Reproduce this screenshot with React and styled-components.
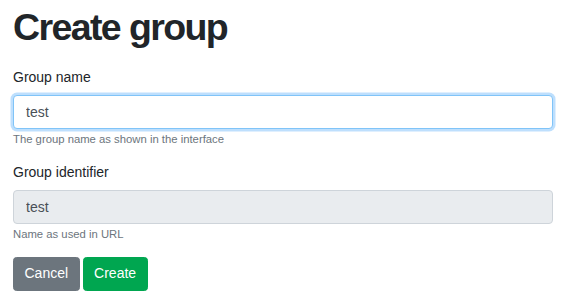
import styled, { createGlobalStyle, css } from "styled-components";

const GlobalStyle = createGlobalStyle`
  * {
    box-sizing: border-box;
  }
  body {
    margin: 0;
    background: #fff;
    color: #212529;
    font-family: "Liberation Sans", Arial, sans-serif;
    font-size: 14px;
    line-height: 1.5;
  }
`;

const Page = styled.div`
  padding: 4px 18px 0 13px;
`;

const Title = styled.h1`
  margin: 0 0 17px;
  font-size: 37.5px;
  line-height: 46px;
  font-weight: 700;
  letter-spacing: -1.6px;
  color: #212529;
`;

const Form = styled.form`
  display: flex;
  flex-direction: column;
`;

const FormGroup = styled.div`
  display: flex;
  flex-direction: column;
  margin-bottom: 14px;
`;

const Label = styled.label`
  margin-bottom: 7px;
  font-size: 14px;
  line-height: 21px;
  color: #212529;
`;

const Input = styled.input`
  display: block;
  width: 100%;
  height: 34px;
  padding: 6px 12px;
  font-family: inherit;
  font-size: 14px;
  line-height: 20px;
  color: #495057;
  background: ${(p) => (p.readOnly ? "#e9ecef" : "#fff")};
  border: 1px solid #ced4da;
  border-radius: 4px;
  outline: none;

  ${(p) =>
    p.$focused &&
    css`
      border-color: #80c4f8;
      box-shadow: 0 0 0 2.5px rgba(40, 150, 250, 0.3);
    `}
`;

const HelpText = styled.small`
  display: block;
  margin-top: 2px;
  font-size: 11.3px;
  line-height: 16.8px;
  color: #6c757d;
`;

const Actions = styled.div`
  display: flex;
  gap: 3px;
`;

const Button = styled.button`
  display: inline-block;
  padding: 5.5px 10.5px;
  font-family: inherit;
  font-size: 14px;
  line-height: 21px;
  color: #fff;
  background: ${(p) => (p.$variant === "success" ? "#00a650" : "#6c757d")};
  border: 1px solid ${(p) => (p.$variant === "success" ? "#00a650" : "#6c757d")};
  border-radius: 3.5px;
  cursor: pointer;
`;

export default function App() {
  return (
    <>
      <GlobalStyle />
      <Page>
        <Title>Create group</Title>
        <Form onSubmit={(e) => e.preventDefault()}>
          <FormGroup>
            <Label htmlFor="group-name">Group name</Label>
            <Input id="group-name" defaultValue="test" $focused />
            <HelpText>The group name as shown in the interface</HelpText>
          </FormGroup>
          <FormGroup>
            <Label htmlFor="group-id">Group identifier</Label>
            <Input id="group-id" defaultValue="test" readOnly />
            <HelpText>Name as used in URL</HelpText>
          </FormGroup>
          <Actions>
            <Button type="button">Cancel</Button>
            <Button type="submit" $variant="success">
              Create
            </Button>
          </Actions>
        </Form>
      </Page>
    </>
  );
}
